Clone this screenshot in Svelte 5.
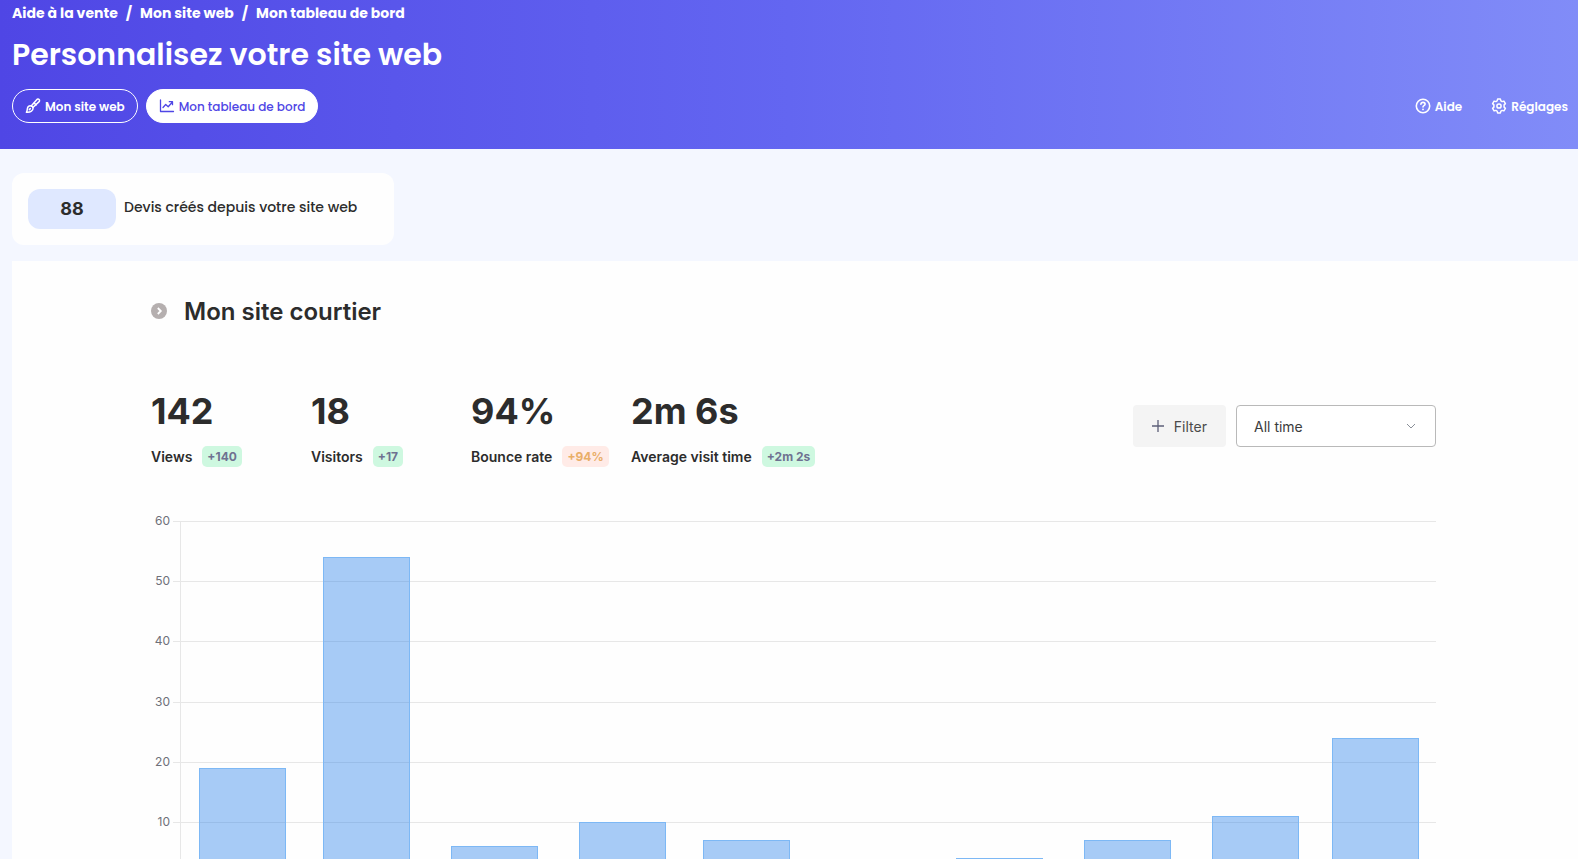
<script>
  let period = $state("All time");

  const crumbs = ["Aide à la vente", "Mon site web", "Mon tableau de bord"];

  const stats = [
    { value: "142", label: "Views", change: "+140", good: true },
    { value: "18", label: "Visitors", change: "+17", good: true },
    { value: "94%", label: "Bounce rate", change: "+94%", good: false },
    { value: "2m 6s", label: "Average visit time", change: "+2m 2s", good: true }
  ];

  const ticks = [60, 50, 40, 30, 20, 10];

  // day = offset of the month on the time axis
  const months = [
    { day: 0, views: 19 },
    { day: 30, views: 54 },
    { day: 61, views: 6 },
    { day: 92, views: 10 },
    { day: 122, views: 7 },
    { day: 153, views: 0 },
    { day: 183, views: 4 },
    { day: 214, views: 7 },
    { day: 245, views: 11 },
    { day: 274, views: 24 }
  ];

  const plotTop = 10;
  const plotHeight = 361;
  const axisLeft = 30;
  const barWidth = 86;

  let chartWidth = $state(1286);
  let plotWidth = $derived(chartWidth - axisLeft);

  function yFor(value) {
    return Math.round(plotTop + plotHeight * (1 - value / 60)) + 0.5;
  }

  function xFor(day) {
    const first = 61;
    const last = plotWidth - 61;
    return Math.round(axisLeft + first + (day / 274) * (last - first) - barWidth / 2) + 0.5;
  }
</script>

<div class="page">
  <header class="header">
    <nav class="breadcrumb" aria-label="Fil d'Ariane">
      {#each crumbs as crumb, i}
        {#if i > 0}<span class="slash">/</span>{/if}
        <a href="#top">{crumb}</a>
      {/each}
    </nav>

    <h1>Personnalisez votre site web</h1>

    <div class="header-row">
      <div class="tabs">
        <button class="tab">
          <svg width="16" height="16" viewBox="0 0 16 16" fill="none" stroke="currentColor" stroke-width="1.5" stroke-linecap="round" stroke-linejoin="round">
            <path d="M6.200 7.900 11.700 1.700c.7-.8 1.800-.8 2.400-.2s.6 1.700-.2 2.400L7.900 9.500" />
            <path d="M6 7.900c1.100.1 2 .9 2.100 2 .1 2.600-2.300 4.700-6.700 4.300.9-.9.700-1.900.9-3.200.3-1.900 1.800-3.300 3.700-3.100z" />
            <path d="M4.300 11.600l1-1M9.200 5l1.900 1.900" />
          </svg>
          Mon site web
        </button>
        <button class="tab active">
          <svg width="16" height="16" viewBox="0 0 16 16" fill="none" stroke="currentColor" stroke-width="1.3" stroke-linecap="round" stroke-linejoin="round">
            <path d="M1.500 2v11.500h13" />
            <path d="M4 9.500l2.700-3 2.500 2.300 4-4.600M10.300 3.700h3.200v3" />
          </svg>
          Mon tableau de bord
        </button>
      </div>

      <div class="links">
        <a href="#aide">
          <svg width="16" height="16" viewBox="0 0 16 16" fill="none" stroke="currentColor" stroke-width="1.600" stroke-linecap="round" stroke-linejoin="round">
            <circle cx="8" cy="8" r="6.700" />
            <path d="M5.900 6.300c.1-1.200.9-1.900 2.100-1.900s2.100.7 2.100 1.800c0 1.400-2.100 1.500-2.100 2.700" />
            <path d="M8 11.300v.1" stroke-width="1.800" />
          </svg>
          <span>Aide</span>
        </a>
        <a href="#reglages">
          <svg width="16" height="16" viewBox="0 0 16 16" fill="none" stroke="currentColor" stroke-width="1.500" stroke-linejoin="round">
            <path d="M6.600 1.100h2.800l.5 1.800 1.200.7 1.800-.5 1.500 2.500-1.300 1.300v2.200l1.300 1.300-1.500 2.500-1.800-.5-1.200.7-.5 1.800H6.600l-.5-1.800-1.200-.7-1.800.5-1.500-2.500 1.300-1.300V6.900L1.600 5.600l1.500-2.500 1.800.5 1.200-.7z" />
            <circle cx="8" cy="8" r="2.100" />
          </svg>
          <span>Réglages</span>
        </a>
      </div>
    </div>
  </header>

  <main>
    <section class="quote-card">
      <strong class="quote-count">88</strong>
      <span class="quote-label">Devis créés depuis votre site web</span>
    </section>

    <section class="panel">
      <div class="site-title">
        <svg width="16" height="16" viewBox="0 0 16 16">
          <circle cx="8" cy="8" r="8" fill="#b5afaf" />
          <path d="M6.800 5l3 3-3 3" fill="none" stroke="#fff" stroke-width="1.800" />
        </svg>
        <h2>Mon site courtier</h2>
      </div>

      <div class="toolbar">
        <div class="stats">
          {#each stats as stat}
            <div class="stat">
              <div class="stat-value">{stat.value}</div>
              <div class="stat-label">
                {stat.label}
                <span class="change" class:bad={!stat.good}>{stat.change}</span>
              </div>
            </div>
          {/each}
        </div>

        <div class="controls">
          <button class="filter">
            <svg width="12" height="12" viewBox="0 0 12 12" stroke="#5c5f78" stroke-width="1.300">
              <path d="M6 0v12M0 6h12" />
            </svg>
            Filter
          </button>
          <div class="period">
            <select bind:value={period} aria-label="Période">
              <option>All time</option>
              <option>Today</option>
              <option>This month</option>
              <option>This year</option>
            </select>
            <svg width="10" height="10" viewBox="0 0 10 10" fill="none" stroke="#8a8f98">
              <path d="M1 3l4 4 4-4" />
            </svg>
          </div>
        </div>
      </div>

      <!-- Views per month -->
      <div class="chart" bind:clientWidth={chartWidth}>
        <svg width="100%" height="400">
          {#each ticks as tick}
            <line x1="22" x2="100%" y1={yFor(tick)} y2={yFor(tick)} stroke="#e7e7e7" />
            <text x="19" y={yFor(tick) + 3.5} text-anchor="end">{tick}</text>
          {/each}
          <line x1="29.5" x2="29.5" y1={plotTop} y2={yFor(0)} stroke="#e7e7e7" />
          {#each months as month}
            {#if month.views > 0}
              <rect
                x={xFor(month.day)}
                y={yFor(month.views)}
                width={barWidth}
                height={yFor(0) - yFor(month.views)}
              />
            {/if}
          {/each}
        </svg>
      </div>
    </section>
  </main>
</div>

<style>
  :global(body) {
    margin: 0;
    background: #f4f7ff;
  }

  .page {
    height: 100vh;
    overflow: hidden;
    font-family: "Poppins", "Inter", sans-serif;
    color: #2c2c2c;
  }

  a {
    color: inherit;
    text-decoration: none;
  }

  button {
    font-family: inherit;
    cursor: pointer;
  }

  /* Header */
  .header {
    height: 149px;
    box-sizing: border-box;
    padding: 3px 10px 0 12px;
    color: #fff;
    background: linear-gradient(90deg, #4f46e5, #6366f1 50%, #818cf8);
  }

  .breadcrumb {
    display: flex;
    gap: 8px;
    font-size: 14px;
    line-height: 20px;
    font-weight: 700;
  }

  h1 {
    margin: 12px 0 0;
    font-size: 30px;
    line-height: 40px;
    font-weight: 600;
  }

  .header-row {
    display: flex;
    justify-content: space-between;
    align-items: center;
    margin-top: 14px;
  }

  .tabs {
    display: flex;
    gap: 8px;
  }

  .tab {
    display: flex;
    align-items: center;
    gap: 4px;
    height: 34px;
    padding: 2px 12px 0 12px;
    border: 1px solid #fff;
    border-radius: 17px;
    background: transparent;
    color: #fff;
    font-size: 12px;
    font-weight: 600;
  }

  .tab svg {
    margin-bottom: 2px;
  }

  .tab.active {
    background: #fff;
    color: #4f46e5;
    font-weight: 500;
  }

  .links {
    display: flex;
    gap: 29px;
    font-size: 12px;
    font-weight: 600;
  }

  .links a {
    display: flex;
    align-items: center;
    gap: 4px;
  }

  .links span {
    padding-top: 2px;
  }

  main {
    padding: 24px 0 0 12px;
  }

  /* Quote counter */
  .quote-card {
    display: flex;
    align-items: center;
    gap: 8px;
    width: 382px;
    height: 72px;
    box-sizing: border-box;
    padding: 16px;
    border-radius: 12px;
    background: #fefefe;
    font-size: 14px;
    font-weight: 500;
  }

  .quote-count {
    width: 88px;
    border-radius: 12px;
    background: #dfe8ff;
    font-family: "Inter", sans-serif;
    font-size: 18px;
    line-height: 40px;
    font-weight: 700;
    text-align: center;
  }

  .quote-label {
    padding-bottom: 4px;
  }

  /* Analytics panel */
  .panel {
    margin-top: 16px;
    padding: 34px 142px 0 139px;
    background: #fefefe;
    font-family: "Inter", sans-serif;
  }

  .site-title {
    display: flex;
    align-items: center;
    gap: 17px;
  }

  .site-title svg {
    margin-bottom: 2px;
  }

  h2 {
    margin: 0;
    font-size: 24px;
    line-height: 34px;
    font-weight: 600;
  }

  .toolbar {
    display: flex;
    justify-content: space-between;
    align-items: center;
    margin-top: 58px;
  }

  .stats {
    display: flex;
  }

  .stat {
    width: 160px;
    white-space: nowrap;
  }

  .stat-value {
    font-size: 36px;
    line-height: 48px;
    font-weight: 700;
  }

  .stat-label {
    display: flex;
    align-items: center;
    gap: 10px;
    margin-top: 11px;
    font-size: 14px;
    font-weight: 600;
  }

  .change {
    padding: 0 5px;
    border-radius: 5px;
    background: #cef8e0;
    color: #6e7191;
    font-size: 12px;
    line-height: 21px;
    font-weight: 700;
  }

  .change.bad {
    background: #ffebe7;
    color: #e9ae67;
  }

  .controls {
    display: flex;
    gap: 10px;
    padding-bottom: 2px;
  }

  .filter {
    display: flex;
    align-items: center;
    gap: 10px;
    height: 42px;
    padding: 0 19px;
    border: none;
    border-radius: 4px;
    background: #f4f4f4;
    color: #4b4b4b;
    font-size: 14px;
  }

  .period {
    display: grid;
    align-items: center;
    width: 200px;
  }

  .period select {
    grid-area: 1 / 1;
    height: 42px;
    padding: 0 17px;
    border: 1px solid #b9b9b9;
    border-radius: 4px;
    background: #fff;
    color: #3c3c3c;
    font-family: inherit;
    font-size: 14px;
    appearance: none;
  }

  .period svg {
    grid-area: 1 / 1;
    justify-self: end;
    margin-right: 20px;
    pointer-events: none;
  }

  .chart {
    margin-top: 44px;
  }

  .chart svg {
    display: block;
  }

  .chart text {
    fill: #6e7079;
    font-size: 12px;
  }

  .chart rect {
    fill: rgba(38, 128, 235, 0.4);
    stroke: #7db8f5;
  }
</style>
